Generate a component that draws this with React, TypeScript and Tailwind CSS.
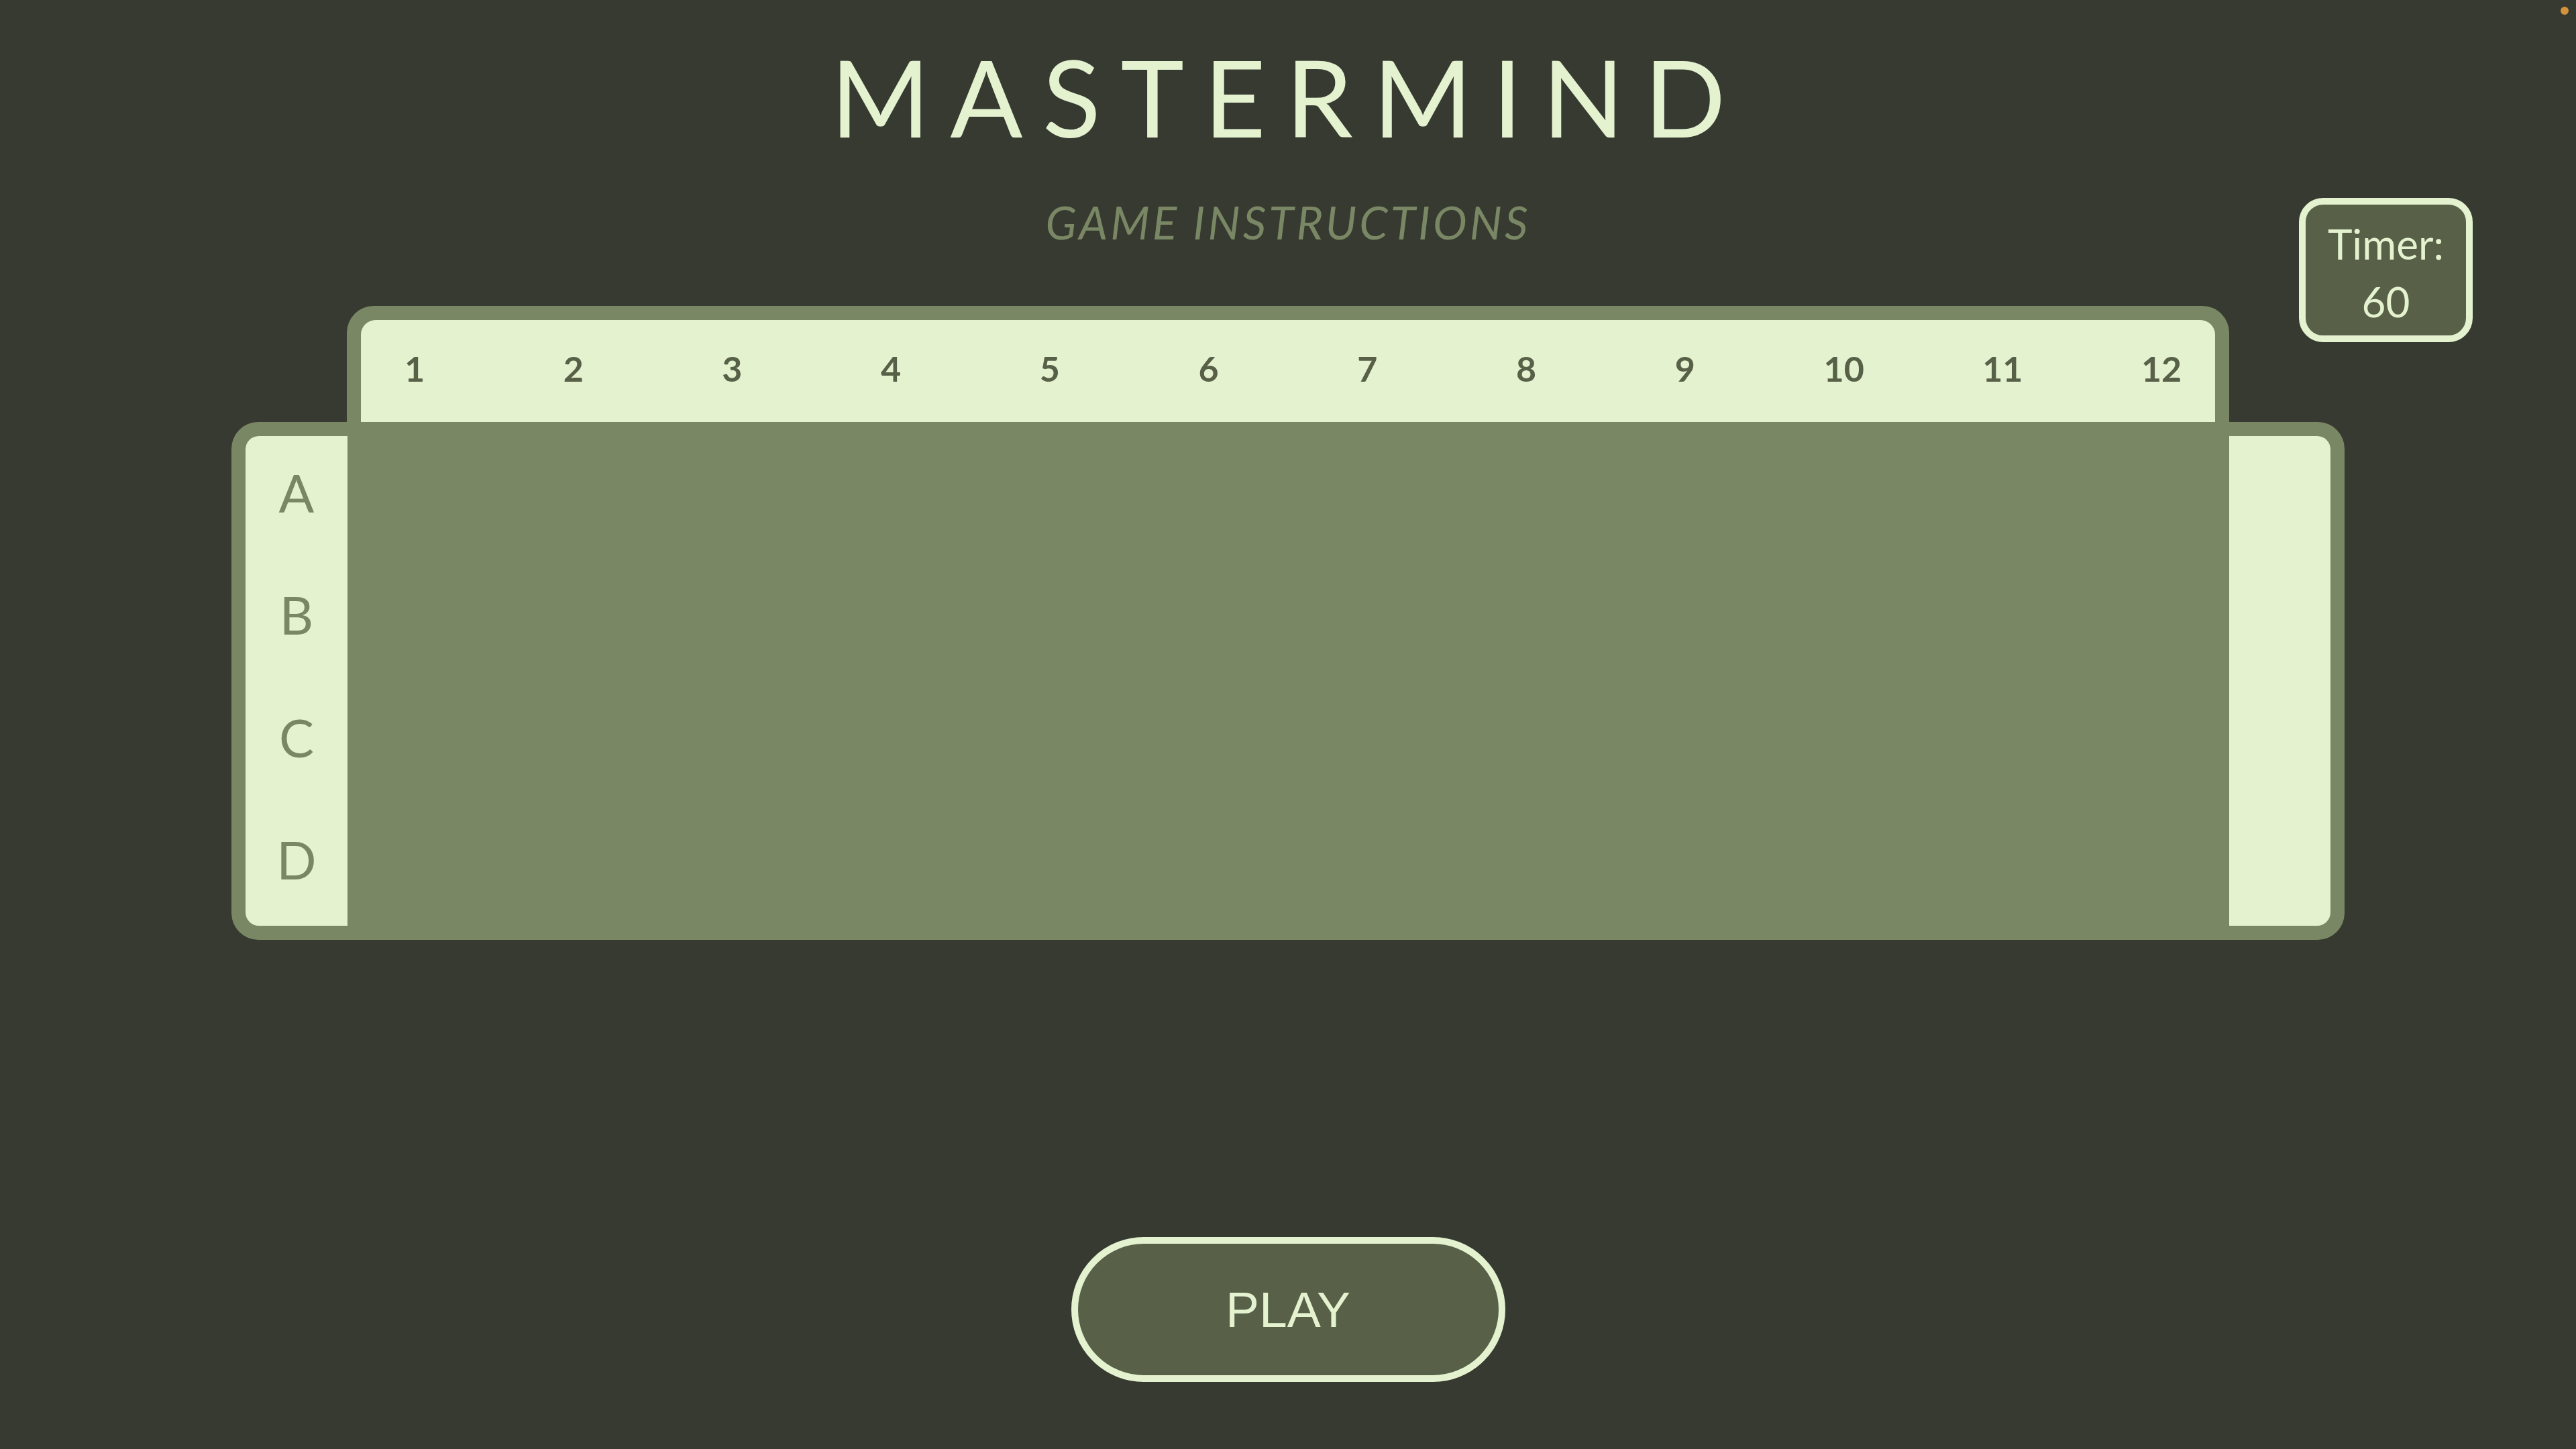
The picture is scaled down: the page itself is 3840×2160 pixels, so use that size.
import React from 'react';

const columns = ['1', '2', '3', '4', '5', '6', '7', '8', '9', '10', '11', '12'];
const rows = ['A', 'B', 'C', 'D'];

const App: React.FC = () => {
    return (
        <div className="relative w-full min-h-[2160px] bg-[#373a31] flex flex-col items-center font-['Lato','Noto_Sans',sans-serif] text-[#e4f2d0]">
            {/* status dot */}
            <div className="absolute top-[10px] right-[11px] w-[12px] h-[12px] rounded-full bg-[#d4923c]" />

            {/* Timer */}
            <div className="absolute top-[295px] right-[154px] w-[259px] h-[215px] rounded-[36px] border-[10px] border-[#e4f2d0] bg-[#586148] flex flex-col items-center justify-center pt-[6px]">
                <span className="text-[62px] leading-[86px]">Timer:</span>
                <span className="text-[62px] leading-[86px]">60</span>
            </div>

            <h1 className="mt-[63px] text-[160px] leading-none font-normal tracking-[0.185em]">MASTERMIND</h1>
            <h2 className="mt-[74px] text-[68px] leading-none italic tracking-[4px] text-[#7a8764]">GAME INSTRUCTIONS</h2>

            {/* Board */}
            <div className="mt-[91px] w-[3150px] flex flex-col">
                <div className="mx-[172px] bg-[#7a8764] rounded-t-[40px] px-[21px] pt-[21px]">
                    <div className="h-[152px] bg-[#e4f2d0] rounded-t-[22px] flex items-center justify-between px-[50px] pb-[8px]">
                        {columns.map((c) => (
                            <span key={c} className="w-[60px] text-center text-[52px] font-bold text-[#586148]">{c}</span>
                        ))}
                    </div>
                </div>
                <div className="h-[772px] bg-[#7a8764] rounded-[40px] p-[21px] flex">
                    <div className="w-[152px] bg-[#e4f2d0] rounded-l-[20px] flex flex-col">
                        {rows.map((r) => (
                            <div key={r} className="flex-1 flex items-center justify-center pb-[14px] text-[78px] text-[#7a8764]">{r}</div>
                        ))}
                    </div>
                    <div className="flex-1" />
                    <div className="w-[151px] bg-[#e4f2d0] rounded-r-[20px]" />
                </div>
            </div>

            <button className="mt-[443px] w-[647px] h-[216px] rounded-full border-[10px] border-[#e4f2d0] bg-[#586148] font-['Liberation_Sans',Arial,sans-serif] text-[75px] text-[#e4f2d0]">
                PLAY
            </button>
        </div>
    );
};

export default App;
